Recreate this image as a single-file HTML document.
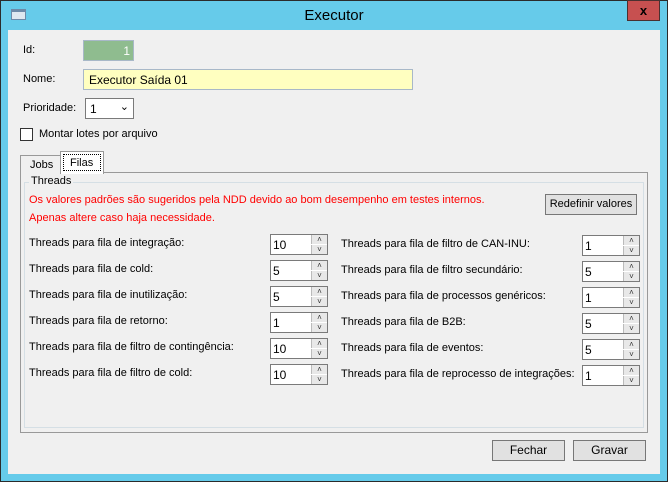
<!DOCTYPE html><html><head><style>
*{box-sizing:border-box}
body{margin:0;width:668px;height:483px;background:#fff;font-family:"Liberation Sans",sans-serif;font-size:11px;color:#000;position:relative;overflow:hidden;white-space:nowrap}
.a{position:absolute}
.sp{position:absolute;width:58px;height:21px;border:1px solid #7a7a7a;background:#fff}
.sp span{position:absolute;left:2px;top:3px;font-size:12px}
.sp i{position:absolute;right:0;width:16px;height:9px;background:#e8e8e8;border-left:1px solid #bbb;font-style:normal;font-size:8px;line-height:9px;text-align:center;color:#333}
.btn{position:absolute;border:1px solid #777;background:#e1e1e1;text-align:center;line-height:19px;font-size:12px}
.lbl{position:absolute}
</style></head><body>
<div class="a" style="left:0;top:0;width:668px;height:482px;background:#66cbea;border:1px solid #2b2b2b"></div>
<div class="a" style="left:11px;top:9px;width:15px;height:11px;background:#dfe8f0;border:1px solid #6d8aa8;border-top:3px solid #6d8aa8"></div>
<div class="a" style="left:0;width:668px;top:7px;text-align:center;font-size:15px;color:#000">Executor</div>
<div class="a" style="left:627px;top:0;width:33px;height:21px;background:#c75050;border:1px solid #4a3030;text-align:center;font-weight:bold;font-size:13px;line-height:19px">x</div>
<div class="a" style="left:8px;top:30px;width:652px;height:444px;background:#f0f0f0"></div>
<div class="lbl" style="left:23px;top:44px">Id:</div>
<div class="a" style="left:83px;top:40px;width:51px;height:21px;background:#8fbc8f;border:1px solid #a8b8c8;color:#fff;text-align:right;padding:3px 3px 0 0;font-size:12px">1</div>
<div class="lbl" style="left:23px;top:73px">Nome:</div>
<div class="a" style="left:83px;top:69px;width:330px;height:21px;background:#ffffc0;border:1px solid #a8b8c8;padding:3px 0 0 5px;font-size:12px">Executor Saída 01</div>
<div class="lbl" style="left:23px;top:102px">Prioridade:</div>
<div class="a" style="left:85px;top:98px;width:49px;height:21px;background:#fff;border:1px solid #7a7a7a;padding:3px 0 0 4px;font-size:12px">1<span style="position:absolute;right:4px;top:1px;font-size:11px">&#8964;</span></div>
<div class="a" style="left:20px;top:128px;width:13px;height:13px;background:#fff;border:1px solid #333"></div>
<div class="lbl" style="left:39px;top:128px">Montar lotes por arquivo</div>
<div class="a" style="left:20px;top:172px;width:628px;height:261px;background:#f0f0f0;border:1px solid #999"></div>
<div class="a" style="left:20px;top:155px;width:41px;height:18px;background:#f0f0f0;border:1px solid #999;border-bottom:none;padding:3px 0 0 9px">Jobs</div>
<div class="a" style="left:60px;top:151px;width:44px;height:23px;background:#fff;border:1px solid #999;border-bottom:none;padding:2px"><div style="border:1px dotted #000;height:17px;padding:2px 0 0 6px">Filas</div></div>
<div class="a" style="left:24px;top:182px;width:620px;height:246px;border:1px solid #d5dfe5"></div>
<div class="a" style="left:29px;top:175px;background:#f0f0f0;padding:0 2px">Threads</div>
<div class="lbl" style="left:29px;top:194px;color:#f00">Os valores padrões são sugeridos pela NDD devido ao bom desempenho em testes internos.</div>
<div class="lbl" style="left:29px;top:212px;color:#f00">Apenas altere caso haja necessidade.</div>
<div class="btn" style="left:545px;top:194px;width:92px;height:21px;font-size:11px">Redefinir valores</div>

<div class="lbl" style="left:29px;top:237px">Threads para fila de integração:</div>
<div class="lbl" style="left:29px;top:263px">Threads para fila de cold:</div>
<div class="lbl" style="left:29px;top:289px">Threads para fila de inutilização:</div>
<div class="lbl" style="left:29px;top:315px">Threads para fila de retorno:</div>
<div class="lbl" style="left:29px;top:341px">Threads para fila de filtro de contingência:</div>
<div class="lbl" style="left:29px;top:367px">Threads para fila de filtro de cold:</div>
<div class="lbl" style="left:341px;top:238px">Threads para fila de filtro de CAN-INU:</div>
<div class="lbl" style="left:341px;top:264px">Threads para fila de filtro secundário:</div>
<div class="lbl" style="left:341px;top:290px">Threads para fila de processos genéricos:</div>
<div class="lbl" style="left:341px;top:316px">Threads para fila de B2B:</div>
<div class="lbl" style="left:341px;top:342px">Threads para fila de eventos:</div>
<div class="lbl" style="left:341px;top:368px">Threads para fila de reprocesso de integrações:</div>

<div class="sp" style="left:270px;top:234px"><span>10</span><i style="top:0">&#708;</i><i style="top:10px">&#709;</i></div>
<div class="sp" style="left:270px;top:260px"><span>5</span><i style="top:0">&#708;</i><i style="top:10px">&#709;</i></div>
<div class="sp" style="left:270px;top:286px"><span>5</span><i style="top:0">&#708;</i><i style="top:10px">&#709;</i></div>
<div class="sp" style="left:270px;top:312px"><span>1</span><i style="top:0">&#708;</i><i style="top:10px">&#709;</i></div>
<div class="sp" style="left:270px;top:338px"><span>10</span><i style="top:0">&#708;</i><i style="top:10px">&#709;</i></div>
<div class="sp" style="left:270px;top:364px"><span>10</span><i style="top:0">&#708;</i><i style="top:10px">&#709;</i></div>
<div class="sp" style="left:582px;top:235px"><span>1</span><i style="top:0">&#708;</i><i style="top:10px">&#709;</i></div>
<div class="sp" style="left:582px;top:261px"><span>5</span><i style="top:0">&#708;</i><i style="top:10px">&#709;</i></div>
<div class="sp" style="left:582px;top:287px"><span>1</span><i style="top:0">&#708;</i><i style="top:10px">&#709;</i></div>
<div class="sp" style="left:582px;top:313px"><span>5</span><i style="top:0">&#708;</i><i style="top:10px">&#709;</i></div>
<div class="sp" style="left:582px;top:339px"><span>5</span><i style="top:0">&#708;</i><i style="top:10px">&#709;</i></div>
<div class="sp" style="left:582px;top:365px"><span>1</span><i style="top:0">&#708;</i><i style="top:10px">&#709;</i></div>

<div class="btn" style="left:492px;top:440px;width:73px;height:21px">Fechar</div>
<div class="btn" style="left:573px;top:440px;width:73px;height:21px">Gravar</div>
</body></html>
